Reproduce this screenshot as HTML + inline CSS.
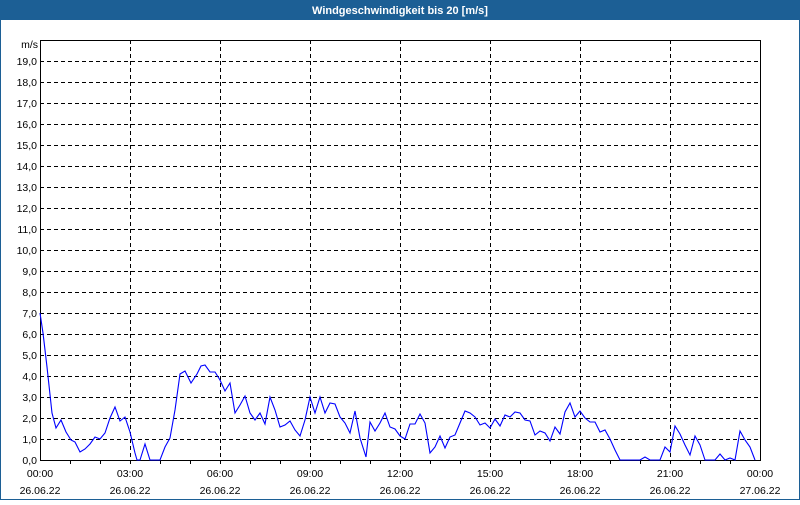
<!DOCTYPE html>
<html><head><meta charset="utf-8"><style>
body{margin:0;width:800px;height:500px;overflow:hidden;background:#fff;font-family:"Liberation Sans",sans-serif}
</style></head><body>
<svg width="800" height="500" xmlns="http://www.w3.org/2000/svg" font-family="Liberation Sans, sans-serif" font-size="10.5">
<rect x="0" y="0" width="800" height="500" fill="#fff"/>
<rect x="0.5" y="0.5" width="799" height="499" fill="none" stroke="#1c5f95"/>
<rect x="0" y="0" width="800" height="20" fill="#1c5f95"/>
<text x="400" y="14" fill="#fff" font-weight="bold" font-size="11" text-anchor="middle">Windgeschwindigkeit bis 20 [m/s]</text>
<g stroke="#000" stroke-dasharray="4,3" stroke-width="1">
<line x1="40" x2="760" y1="439.5" y2="439.5"/><line x1="40" x2="760" y1="418.5" y2="418.5"/><line x1="40" x2="760" y1="397.5" y2="397.5"/><line x1="40" x2="760" y1="376.5" y2="376.5"/><line x1="40" x2="760" y1="355.5" y2="355.5"/><line x1="40" x2="760" y1="334.5" y2="334.5"/><line x1="40" x2="760" y1="313.5" y2="313.5"/><line x1="40" x2="760" y1="292.5" y2="292.5"/><line x1="40" x2="760" y1="271.5" y2="271.5"/><line x1="40" x2="760" y1="250.5" y2="250.5"/><line x1="40" x2="760" y1="229.5" y2="229.5"/><line x1="40" x2="760" y1="208.5" y2="208.5"/><line x1="40" x2="760" y1="187.5" y2="187.5"/><line x1="40" x2="760" y1="166.5" y2="166.5"/><line x1="40" x2="760" y1="145.5" y2="145.5"/><line x1="40" x2="760" y1="124.5" y2="124.5"/><line x1="40" x2="760" y1="103.5" y2="103.5"/><line x1="40" x2="760" y1="82.5" y2="82.5"/><line x1="40" x2="760" y1="61.5" y2="61.5"/>
<line x1="130.5" x2="130.5" y1="40" y2="460"/><line x1="220.5" x2="220.5" y1="40" y2="460"/><line x1="310.5" x2="310.5" y1="40" y2="460"/><line x1="400.5" x2="400.5" y1="40" y2="460"/><line x1="490.5" x2="490.5" y1="40" y2="460"/><line x1="580.5" x2="580.5" y1="40" y2="460"/><line x1="670.5" x2="670.5" y1="40" y2="460"/>
</g>
<rect x="40.5" y="40.5" width="720" height="420" fill="none" stroke="#000"/>
<g stroke="#000">
<path d="M70.5 460v4M100.5 460v4M130.5 460v4M160.5 460v4M190.5 460v4M220.5 460v4M250.5 460v4M280.5 460v4M310.5 460v4M340.5 460v4M370.5 460v4M400.5 460v4M430.5 460v4M460.5 460v4M490.5 460v4M520.5 460v4M550.5 460v4M580.5 460v4M610.5 460v4M640.5 460v4M670.5 460v4M700.5 460v4M730.5 460v4"/>
</g>
<polyline fill="none" stroke="#0000ff" stroke-width="1.1" points="40,313 43,333 47,367 52,413 56,428 61,420 66,432 71,440 75,442 80,452 85,449 90,444 95,437 100,439 105,433 110,418 115,407 120,421 125,417 130,432 135,453 137,460 140,460 145,444 150,460 160,460 165,447 170,438 175,410 180,374 185,371 191,383 197,374 201,366 205,365 210,372 215,372 220,380 225,391 230,383 235,413 240,405 245,396 250,413 255,420 260,413 265,424 270,397 275,410 280,427 285,425 290,421 295,430 300,436 305,420 310,397 315,413 320,397 325,413 330,403 335,404 340,417 345,423 350,433 355,411 360,438 366,457 370,422 375,431 380,423 385,413 390,427 395,429 400,436 405,439 410,424 415,424 420,414 425,423 430,453 435,447 440,436 445,448 450,437 455,435 460,423 465,411 470,413 475,417 480,425 485,423 490,428 495,419 500,426 505,415 510,417 515,412 520,413 525,420 530,421 535,435 540,431 545,433 550,441 555,427 560,434 565,412 570,403 575,417 580,411 585,418 590,422 595,422 600,432 605,430 610,439 615,450 620,460 640,460 645,457 650,460 660,460 665,447 670,452 675,426 680,434 685,445 690,455 695,436 700,445 705,460 715,460 720,454 725,460 730,458 735,460 740,431 745,440 750,447 755,460"/>
<g fill="#000" text-anchor="end">
<text x="37" y="464">0,0</text><text x="37" y="443">1,0</text><text x="37" y="422">2,0</text><text x="37" y="401">3,0</text><text x="37" y="380">4,0</text><text x="37" y="359">5,0</text><text x="37" y="338">6,0</text><text x="37" y="317">7,0</text><text x="37" y="296">8,0</text><text x="37" y="275">9,0</text><text x="37" y="254">10,0</text><text x="37" y="233">11,0</text><text x="37" y="212">12,0</text><text x="37" y="191">13,0</text><text x="37" y="170">14,0</text><text x="37" y="149">15,0</text><text x="37" y="128">16,0</text><text x="37" y="107">17,0</text><text x="37" y="86">18,0</text><text x="37" y="65">19,0</text>
<text x="38" y="48">m/s</text>
</g>
<g fill="#000" text-anchor="middle">
<text x="40" y="477">00:00</text><text x="40" y="494">26.06.22</text>
<text x="130" y="477">03:00</text><text x="130" y="494">26.06.22</text>
<text x="220" y="477">06:00</text><text x="220" y="494">26.06.22</text>
<text x="310" y="477">09:00</text><text x="310" y="494">26.06.22</text>
<text x="400" y="477">12:00</text><text x="400" y="494">26.06.22</text>
<text x="490" y="477">15:00</text><text x="490" y="494">26.06.22</text>
<text x="580" y="477">18:00</text><text x="580" y="494">26.06.22</text>
<text x="670" y="477">21:00</text><text x="670" y="494">26.06.22</text>
<text x="760" y="477">00:00</text><text x="760" y="494">27.06.22</text>
</g>
</svg>
</body></html>
